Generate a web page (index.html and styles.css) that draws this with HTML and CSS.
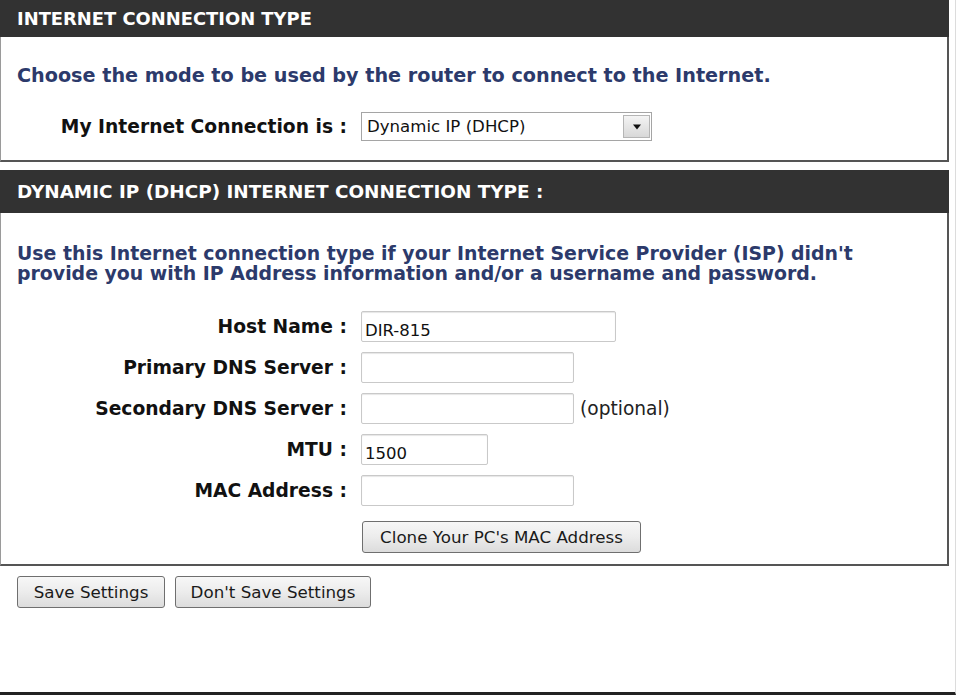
FILE: index.html
```html
<!DOCTYPE html>
<html>
<head>
<meta charset="utf-8">
<link rel="stylesheet" href="styles.css">
</head>
<body>
<div class="page">
  <div class="section">
    <div class="hd hd-first">INTERNET CONNECTION TYPE</div>
    <div class="bd bd-first">
      <p class="desc">Choose the mode to be used by the router to connect to the Internet.</p>
      <div class="row row-select">
        <label class="lbl lbl-conn">My Internet Connection is :</label>
        <div class="select">
          <span class="select-text">Dynamic IP (DHCP)</span>
          <span class="select-btn"><svg width="10" height="6" viewBox="0 0 10 6"><path d="M1 0.5 L9 0.5 L5 5.5 Z" fill="#111"/></svg></span>
        </div>
      </div>
    </div>
  </div>

  <div class="section section-second">
    <div class="hd hd-second">DYNAMIC IP (DHCP) INTERNET CONNECTION TYPE :</div>
    <div class="bd bd-second">
      <p class="desc desc-two">Use this Internet connection type if your Internet Service Provider (ISP) didn't<br>provide you with IP Address information and/or a username and password.</p>
      <div class="form">
        <label class="lbl">Host Name :</label>
        <div class="field"><input class="inp inp-host" type="text" value="DIR-815"></div>
        <label class="lbl">Primary DNS Server :</label>
        <div class="field"><input class="inp inp-mid" type="text" value=""></div>
        <label class="lbl">Secondary DNS Server :</label>
        <div class="field"><input class="inp inp-mid" type="text" value=""><span class="opt">(optional)</span></div>
        <label class="lbl">MTU :</label>
        <div class="field"><input class="inp inp-mtu" type="text" value="1500"></div>
        <label class="lbl">MAC Address :</label>
        <div class="field"><input class="inp inp-mid" type="text" value=""></div>
        <span class="lbl"></span>
        <div class="field field-clone"><button class="btn btn-clone" type="button">Clone Your PC's MAC Address</button></div>
      </div>
    </div>
  </div>

  <div class="actions">
    <button class="btn btn-save" type="button">Save Settings</button>
    <button class="btn btn-nosave" type="button">Don't Save Settings</button>
  </div>
</div>
</body>
</html>
```

FILE: styles.css
```css
html, body {
  margin: 0;
  padding: 0;
  background: #fff;
}
body {
  width: 957px;
  height: 695px;
  overflow: hidden;
  font-family: "DejaVu Sans", Verdana, sans-serif;
}
.page {
  box-sizing: border-box;
  width: 956px;
  height: 695px;
  border-right: 1px solid #dcdcdc;
  border-bottom: 3px solid #222;
}
.section {
  width: 949px;
}
.section-second {
  margin-top: 8px;
}
.hd {
  background: #323232;
  color: #fff;
  font-weight: bold;
  font-size: 17.9px;
  padding-left: 17px;
  display: flex;
  align-items: center;
  box-sizing: border-box;
}
.hd-first {
  height: 37px;
}
.hd-second {
  height: 43px;
  font-size: 18.4px;
}
.bd {
  border-left: 1px solid #9a9a9a;
  border-right: 2px solid #555;
  border-bottom: 2px solid #555;
  box-sizing: border-box;
}
.bd-first {
  height: 125px;
  padding-top: 29px;
}
.bd-second {
  height: 353px;
  padding-top: 30px;
}
.desc {
  margin: 0 0 0 16px;
  color: #2c3a6b;
  font-weight: bold;
  font-size: 19.2px;
  line-height: 20px;
}
.desc-two {
  font-size: 18.9px;
}
.row-select {
  display: flex;
  align-items: center;
  margin-top: 26px;
}
.lbl {
  font-weight: bold;
  font-size: 18.7px;
  color: #111;
  text-align: right;
}
.lbl-conn {
  width: 346px;
  margin-right: 14px;
}
.select {
  box-sizing: border-box;
  width: 291px;
  height: 29px;
  border: 1px solid #a5a5a5;
  display: flex;
  align-items: center;
  justify-content: space-between;
  padding: 2px 1px 2px 5px;
}
.select-text {
  font-size: 16.6px;
  color: #111;
}
.select-btn {
  box-sizing: border-box;
  width: 27px;
  height: 23px;
  border: 1px solid #b5b5b5;
  background: linear-gradient(#f4f4f4, #d8d8d8);
  display: flex;
  align-items: center;
  justify-content: center;
}
.form {
  display: grid;
  grid-template-columns: 346px auto;
  column-gap: 14px;
  row-gap: 10px;
  align-items: center;
  margin-top: 28px;
}
.field {
  display: flex;
  align-items: center;
  height: 31px;
}
.field-clone {
  margin-top: 5px;
}
.inp {
  box-sizing: border-box;
  height: 31px;
  border: 1px solid #c9c9c9;
  border-radius: 2px;
  box-shadow: inset 0 1px 1px #e6e6e6;
  font-family: inherit;
  font-size: 16.5px;
  padding: 7px 3px 0;
  color: #111;
  margin: 0;
  outline: none;
}
.inp-host { width: 255px; }
.inp-mid { width: 213px; }
.inp-mtu { width: 127px; }
.opt {
  font-size: 18.6px;
  color: #222;
  margin-left: 6px;
}
.btn {
  box-sizing: border-box;
  height: 32px;
  border: 1px solid #6f6f6f;
  border-radius: 3px;
  background: linear-gradient(#f7f7f7 0%, #ececec 50%, #dcdcdc 100%);
  font-family: inherit;
  font-size: 16.7px;
  color: #1a1a1a;
  padding: 0 6px;
  margin: 0;
}
.btn-clone {
  width: 279px;
  margin-left: 1px;
}
.actions {
  display: flex;
  gap: 10px;
  padding: 10px 0 0 17px;
}
.btn-save { width: 148px; }
.btn-nosave { width: 196px; }
```
